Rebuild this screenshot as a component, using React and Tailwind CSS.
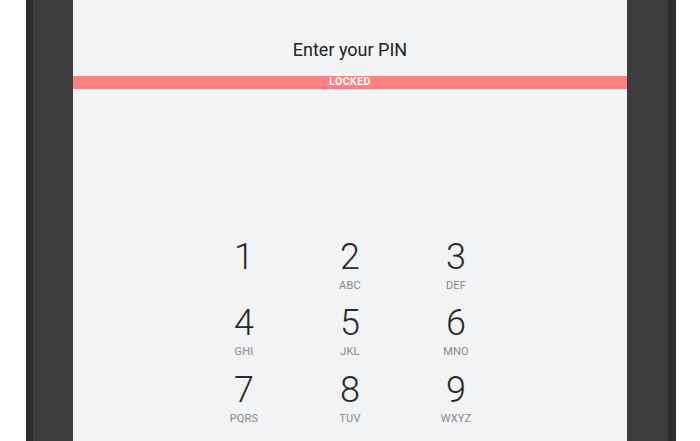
export default function App() {
  const keys = [
    ["1", ""],
    ["2", "ABC"],
    ["3", "DEF"],
    ["4", "GHI"],
    ["5", "JKL"],
    ["6", "MNO"],
    ["7", "PQRS"],
    ["8", "TUV"],
    ["9", "WXYZ"],
  ];
  return (
    <div
      className="w-[700px] h-[441px] bg-white flex overflow-hidden"
      style={{ fontFamily: "Roboto, 'Liberation Sans', sans-serif" }}
    >
      <div className="w-[26px] shrink-0 bg-white" />
      <div className="w-[7px] shrink-0 bg-[#2d2d2d]" />
      <div className="w-[40px] shrink-0 bg-[#3d3d3d]" />
      <div className="w-[554px] shrink-0 bg-[#f2f3f5] flex flex-col items-center">
        <div className="mt-[40.7px] text-[18px] leading-[18px] text-[#222222]">
          Enter your PIN
        </div>
        <div className="mt-[17.3px] w-full h-[13px] bg-[#ff827f] flex items-center justify-center">
          <span className="text-[10.5px] leading-[10px] font-bold text-white tracking-[0.5px]">
            LOCKED
          </span>
        </div>
        <div className="mt-[150.3px] grid grid-cols-[106px_106px_106px] gap-y-[14.2px]">
          {keys.map(([d, l]) => (
            <div key={d} className="flex flex-col items-center">
              <span className="text-[36px] leading-[36px] font-light text-[#2a2a2a]">
                {d}
              </span>
              <span className="mt-[5px] h-[11px] text-[11px] leading-[11px] text-[#888888] tracking-[0.2px]">
                {l || "\u00a0"}
              </span>
            </div>
          ))}
        </div>
      </div>
      <div className="w-[41px] shrink-0 bg-[#3d3d3d]" />
      <div className="w-[8px] shrink-0 bg-[#2d2d2d]" />
      <div className="flex-1 bg-white" />
    </div>
  );
}
